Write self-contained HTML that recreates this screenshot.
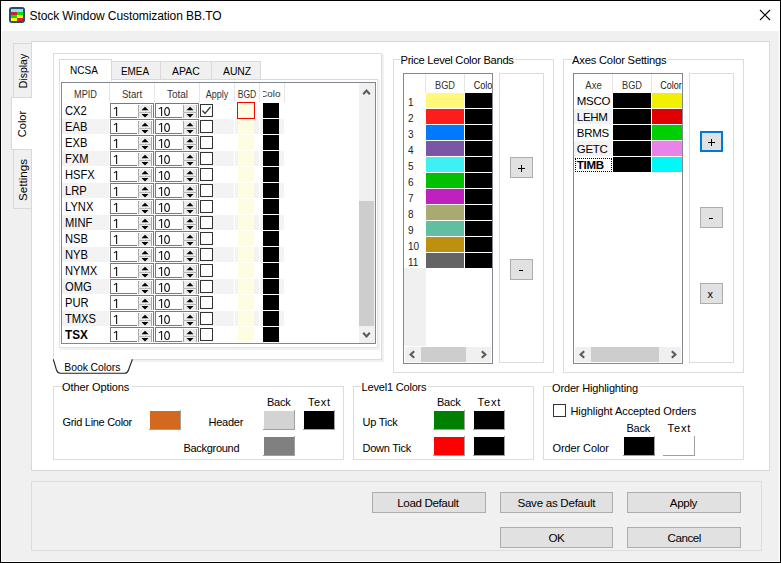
<!DOCTYPE html><html><head><meta charset="utf-8"><style>
html,body{margin:0;padding:0;}
body{width:781px;height:563px;position:relative;overflow:hidden;background:#f0f0f0;font-family:"Liberation Sans",sans-serif;}
.a{position:absolute;box-sizing:border-box;}
.t{white-space:pre;}
</style></head><body>
<div class="a" style="left:0px;top:0px;width:781px;height:563px;background:#f0f0f0;"></div>
<div class="a" style="left:1px;top:1px;width:779px;height:30px;background:#fff;"></div>
<div class="a" style="left:1px;top:1px;width:1px;height:561px;background:#fff;"></div>
<div class="a" style="left:779px;top:1px;width:1px;height:561px;background:#fff;"></div>
<div class="a" style="left:1px;top:561px;width:779px;height:1px;background:#fff;"></div>
<div class="a" style="left:0px;top:0px;width:781px;height:1px;background:#000;"></div>
<div class="a" style="left:0px;top:562px;width:781px;height:1px;background:#000;"></div>
<div class="a" style="left:0px;top:0px;width:1px;height:563px;background:#000;"></div>
<div class="a" style="left:780px;top:0px;width:1px;height:563px;background:#000;"></div>
<div class="a" style="left:9px;top:7px;width:16px;height:16px;background:#2b4b70;border-radius:3px;"></div>
<div class="a" style="left:11px;top:9px;width:12px;height:3px;background:#90e0f0;"></div>
<div class="a" style="left:11px;top:12px;width:6px;height:3px;background:#d42222;"></div>
<div class="a" style="left:17px;top:12px;width:6px;height:3px;background:#00e400;"></div>
<div class="a" style="left:11px;top:15px;width:6px;height:3px;background:#00e400;"></div>
<div class="a" style="left:17px;top:15px;width:6px;height:3px;background:#ffff00;"></div>
<div class="a" style="left:11px;top:18px;width:6px;height:3px;background:#ffff00;"></div>
<div class="a" style="left:17px;top:18px;width:6px;height:3px;background:#d42222;"></div>
<div class="a t" style="left:29.50px;top:10.04px;font-size:12px;line-height:12px;color:#000;letter-spacing:-0.08px;">Stock Window Customization BB.TO</div>
<svg class="a" style="left:759px;top:9px" width="12" height="12"><path d="M1 1L11 11M11 1L1 11" stroke="#000" stroke-width="1.1"/></svg>
<div class="a" style="left:13px;top:43px;width:19px;height:55px;border:1px solid #d9d9d9;background:#f0f0f0;"></div>
<div class="a" style="left:13px;top:149px;width:19px;height:60px;border:1px solid #d9d9d9;background:#f0f0f0;"></div>
<div class="a" style="left:31px;top:41px;width:739px;height:430px;border:1px solid #d9d9d9;background:#fff;"></div>
<div class="a" style="left:11px;top:97px;width:21px;height:53px;border:1px solid #d9d9d9;background:#fff;border-right:none;"></div>
<div class="a" style="left:31px;top:98px;width:1px;height:51px;background:#fff;"></div>
<div class="a t" style="left:23px;top:71px;font-size:10.5px;line-height:10.5px;transform:translate(-50%,-50%) rotate(-90deg);">Display</div>
<div class="a t" style="left:21.5px;top:124px;font-size:11px;line-height:11px;transform:translate(-50%,-50%) rotate(-90deg);">Color</div>
<div class="a t" style="left:23px;top:179.5px;font-size:11.6px;line-height:11.6px;transform:translate(-50%,-50%) rotate(-90deg);">Settings</div>
<div class="a" style="left:53px;top:53px;width:329px;height:307px;border:1px solid #dcdcdc;background:#fff;"></div>
<div class="a" style="left:382px;top:54px;width:2px;height:308px;background:#f1f1f1;"></div>
<div class="a" style="left:132px;top:360px;width:252px;height:2px;background:#f1f1f1;"></div>
<svg class="a" style="left:50px;top:356px" width="90" height="22"><path d="M3.3 2.4 L3.3 3.3 L6.5 14 Q7.6 17.2 10.5 17.2 H74.5 Q77.6 17.2 78.5 14 L82.4 3.3 L82.4 2.4 Z" fill="#fff" stroke="none"/><path d="M3.3 3.3 L6.5 14 Q7.6 17.2 10.5 17.2 H74.5 Q77.6 17.2 78.5 14 L82.4 3.3" fill="none" stroke="#222" stroke-width="1.1"/></svg>
<div class="a t" style="left:64.30px;top:363.17px;font-size:10.4px;line-height:10.4px;color:#000;letter-spacing:-0.05px;">Book Colors</div>
<div class="a" style="left:59px;top:79px;width:319px;height:269px;border:1px solid #e3e3e3;background:#fff;"></div>
<div class="a" style="left:378px;top:80px;width:2px;height:270px;background:#f2f2f2;"></div>
<div class="a" style="left:60px;top:348px;width:320px;height:2px;background:#f2f2f2;"></div>
<div class="a" style="left:111px;top:61px;width:50px;height:19px;border:1px solid #d9d9d9;background:#f0f0f0;"></div>
<div class="a" style="left:160px;top:61px;width:52px;height:19px;border:1px solid #d9d9d9;background:#f0f0f0;"></div>
<div class="a" style="left:211px;top:61px;width:50px;height:19px;border:1px solid #d9d9d9;background:#f0f0f0;"></div>
<div class="a" style="left:59px;top:59px;width:53px;height:22px;border:1px solid #d9d9d9;background:#fff;border-bottom:none;"></div>
<div class="a" style="left:111px;top:79px;width:267px;height:1px;background:#d9d9d9;"></div>
<div class="a" style="left:60px;top:79px;width:51px;height:1px;background:#fff;"></div>
<div class="a t" style="left:70.00px;top:65.42px;font-size:11px;line-height:11px;color:#000;transform:scaleX(0.91);transform-origin:0 0;">NCSA</div>
<div class="a t" style="left:120.70px;top:66.42px;font-size:11px;line-height:11px;color:#000;transform:scaleX(0.9);transform-origin:0 0;">EMEA</div>
<div class="a t" style="left:172.30px;top:66.42px;font-size:11px;line-height:11px;color:#000;transform:scaleX(0.95);transform-origin:0 0;">APAC</div>
<div class="a t" style="left:223.30px;top:66.42px;font-size:11px;line-height:11px;color:#000;transform:scaleX(0.94);transform-origin:0 0;">AUNZ</div>
<div class="a" style="left:61px;top:82px;width:315px;height:262px;border:1px solid #828790;background:#fff;"></div>
<div class="a" style="left:109px;top:83px;width:1px;height:19px;background:#e5e5e5;"></div>
<div class="a" style="left:154px;top:83px;width:1px;height:19px;background:#e5e5e5;"></div>
<div class="a" style="left:199px;top:83px;width:1px;height:19px;background:#e5e5e5;"></div>
<div class="a" style="left:234px;top:83px;width:1px;height:19px;background:#e5e5e5;"></div>
<div class="a" style="left:259px;top:83px;width:1px;height:19px;background:#e5e5e5;"></div>
<div class="a" style="left:284px;top:83px;width:1px;height:19px;background:#e5e5e5;"></div>
<div class="a" style="left:62px;top:88.88px;width:47px;height:12.3px;overflow:hidden;"><div class="a t" style="left:0px;top:0;width:47px;text-align:center;font-size:10.3px;line-height:11.3px;color:#333;letter-spacing:0px;transform:scaleX(0.89);transform-origin:50% 0;">MPID</div></div>
<div class="a" style="left:110px;top:88.88px;width:44px;height:12.3px;overflow:hidden;"><div class="a t" style="left:0px;top:0;width:44px;text-align:center;font-size:10.3px;line-height:11.3px;color:#333;letter-spacing:0px;transform:scaleX(0.93);transform-origin:50% 0;">Start</div></div>
<div class="a" style="left:156px;top:88.88px;width:43px;height:12.3px;overflow:hidden;"><div class="a t" style="left:0px;top:0;width:43px;text-align:center;font-size:10.3px;line-height:11.3px;color:#333;letter-spacing:0px;transform:scaleX(0.97);transform-origin:50% 0;">Total</div></div>
<div class="a" style="left:200px;top:88.88px;width:34px;height:12.3px;overflow:hidden;"><div class="a t" style="left:0px;top:0;width:34px;text-align:center;font-size:10.3px;line-height:11.3px;color:#333;letter-spacing:0px;transform:scaleX(0.88);transform-origin:50% 0;">Apply</div></div>
<div class="a" style="left:235px;top:88.90px;width:24px;height:12px;overflow:hidden;"><div class="a t" style="left:0px;top:0;width:24px;text-align:center;font-size:10px;line-height:11px;color:#333;letter-spacing:0px;transform:scaleX(0.86);transform-origin:50% 0;">BGD</div></div>
<div class="a" style="left:263px;top:88.92px;width:18px;height:11.8px;overflow:hidden;"><div class="a t" style="left:-8px;top:0;width:34px;text-align:center;font-size:9.8px;line-height:10.8px;color:#333;letter-spacing:0px;">Color</div></div>
<div class="a t" style="left:64.80px;top:105.34px;font-size:12px;line-height:12px;color:#000;transform:scaleX(0.93);transform-origin:0 0;">CX2</div>
<div class="a" style="left:110px;top:103px;width:44px;height:15px;background:#fff;border-top:1px solid #7a7a7a;border-left:1px solid #7a7a7a;border-right:1px solid #7a7a7a;"></div>
<div class="a" style="left:110px;top:117px;width:27px;height:1px;background:#7a7a7a;"></div>
<div class="a" style="left:138px;top:105px;width:14px;height:13px;background:#ececec;"></div>
<div class="a" style="left:138px;top:105px;width:1px;height:13px;background:#a8a8a8;"></div>
<div class="a" style="left:151px;top:105px;width:1px;height:13px;background:#a8a8a8;"></div>
<div class="a" style="left:138px;top:112px;width:14px;height:1px;background:#b8b8b8;"></div>
<svg class="a" style="left:138px;top:105px" width="14" height="13"><path d="M3.5 5.2 L7 1.8 L10.5 5.2Z M3.5 9 L7 12.4 L10.5 9Z" fill="#000"/></svg>
<svg class="a" style="left:110px;top:103px" width="20" height="15"><rect x="6" y="4" width="1.15" height="9" fill="#1a1a1a"/><path d="M4 5.9 L6.6 4.3" stroke="#1a1a1a" stroke-width="1.1"/></svg>
<div class="a" style="left:155px;top:103px;width:44px;height:15px;background:#fff;border-top:1px solid #7a7a7a;border-left:1px solid #7a7a7a;border-right:1px solid #7a7a7a;"></div>
<div class="a" style="left:155px;top:117px;width:27px;height:1px;background:#7a7a7a;"></div>
<div class="a" style="left:183px;top:105px;width:14px;height:13px;background:#ececec;"></div>
<div class="a" style="left:183px;top:105px;width:1px;height:13px;background:#a8a8a8;"></div>
<div class="a" style="left:196px;top:105px;width:1px;height:13px;background:#a8a8a8;"></div>
<div class="a" style="left:183px;top:112px;width:14px;height:1px;background:#b8b8b8;"></div>
<svg class="a" style="left:183px;top:105px" width="14" height="13"><path d="M3.5 5.2 L7 1.8 L10.5 5.2Z M3.5 9 L7 12.4 L10.5 9Z" fill="#000"/></svg>
<svg class="a" style="left:155px;top:103px" width="20" height="15"><rect x="6" y="4" width="1.15" height="9" fill="#1a1a1a"/><path d="M4 5.9 L6.6 4.3" stroke="#1a1a1a" stroke-width="1.1"/><ellipse cx="12.05" cy="8.5" rx="2.35" ry="3.95" fill="none" stroke="#1a1a1a" stroke-width="1.15"/></svg>
<div class="a" style="left:200px;top:104px;width:13px;height:13px;border:1px solid #333;background:#fff;"></div>
<div class="a" style="left:238px;top:103px;width:16px;height:15px;background:#fffde1;"></div>
<div class="a" style="left:263px;top:103px;width:16px;height:15px;background:#000;"></div>
<div class="a" style="left:62px;top:119px;width:222px;height:15px;background:#f3f3f3;"></div>
<div class="a" style="left:109px;top:119px;width:1px;height:15px;background:#fff;"></div>
<div class="a" style="left:234px;top:119px;width:1px;height:15px;background:#fff;"></div>
<div class="a" style="left:259px;top:119px;width:1px;height:15px;background:#fff;"></div>
<div class="a t" style="left:64.80px;top:121.34px;font-size:12px;line-height:12px;color:#000;transform:scaleX(0.93);transform-origin:0 0;">EAB</div>
<div class="a" style="left:110px;top:119px;width:44px;height:15px;background:#fff;border-top:1px solid #7a7a7a;border-left:1px solid #7a7a7a;border-right:1px solid #7a7a7a;"></div>
<div class="a" style="left:110px;top:133px;width:27px;height:1px;background:#7a7a7a;"></div>
<div class="a" style="left:138px;top:121px;width:14px;height:13px;background:#ececec;"></div>
<div class="a" style="left:138px;top:121px;width:1px;height:13px;background:#a8a8a8;"></div>
<div class="a" style="left:151px;top:121px;width:1px;height:13px;background:#a8a8a8;"></div>
<div class="a" style="left:138px;top:128px;width:14px;height:1px;background:#b8b8b8;"></div>
<svg class="a" style="left:138px;top:121px" width="14" height="13"><path d="M3.5 5.2 L7 1.8 L10.5 5.2Z M3.5 9 L7 12.4 L10.5 9Z" fill="#000"/></svg>
<svg class="a" style="left:110px;top:119px" width="20" height="15"><rect x="6" y="4" width="1.15" height="9" fill="#1a1a1a"/><path d="M4 5.9 L6.6 4.3" stroke="#1a1a1a" stroke-width="1.1"/></svg>
<div class="a" style="left:155px;top:119px;width:44px;height:15px;background:#fff;border-top:1px solid #7a7a7a;border-left:1px solid #7a7a7a;border-right:1px solid #7a7a7a;"></div>
<div class="a" style="left:155px;top:133px;width:27px;height:1px;background:#7a7a7a;"></div>
<div class="a" style="left:183px;top:121px;width:14px;height:13px;background:#ececec;"></div>
<div class="a" style="left:183px;top:121px;width:1px;height:13px;background:#a8a8a8;"></div>
<div class="a" style="left:196px;top:121px;width:1px;height:13px;background:#a8a8a8;"></div>
<div class="a" style="left:183px;top:128px;width:14px;height:1px;background:#b8b8b8;"></div>
<svg class="a" style="left:183px;top:121px" width="14" height="13"><path d="M3.5 5.2 L7 1.8 L10.5 5.2Z M3.5 9 L7 12.4 L10.5 9Z" fill="#000"/></svg>
<svg class="a" style="left:155px;top:119px" width="20" height="15"><rect x="6" y="4" width="1.15" height="9" fill="#1a1a1a"/><path d="M4 5.9 L6.6 4.3" stroke="#1a1a1a" stroke-width="1.1"/><ellipse cx="12.05" cy="8.5" rx="2.35" ry="3.95" fill="none" stroke="#1a1a1a" stroke-width="1.15"/></svg>
<div class="a" style="left:200px;top:120px;width:13px;height:13px;border:1px solid #333;background:#fff;"></div>
<div class="a" style="left:238px;top:119px;width:16px;height:15px;background:#fffde1;"></div>
<div class="a" style="left:263px;top:119px;width:16px;height:15px;background:#000;"></div>
<div class="a t" style="left:64.80px;top:137.34px;font-size:12px;line-height:12px;color:#000;transform:scaleX(0.93);transform-origin:0 0;">EXB</div>
<div class="a" style="left:110px;top:135px;width:44px;height:15px;background:#fff;border-top:1px solid #7a7a7a;border-left:1px solid #7a7a7a;border-right:1px solid #7a7a7a;"></div>
<div class="a" style="left:110px;top:149px;width:27px;height:1px;background:#7a7a7a;"></div>
<div class="a" style="left:138px;top:137px;width:14px;height:13px;background:#ececec;"></div>
<div class="a" style="left:138px;top:137px;width:1px;height:13px;background:#a8a8a8;"></div>
<div class="a" style="left:151px;top:137px;width:1px;height:13px;background:#a8a8a8;"></div>
<div class="a" style="left:138px;top:144px;width:14px;height:1px;background:#b8b8b8;"></div>
<svg class="a" style="left:138px;top:137px" width="14" height="13"><path d="M3.5 5.2 L7 1.8 L10.5 5.2Z M3.5 9 L7 12.4 L10.5 9Z" fill="#000"/></svg>
<svg class="a" style="left:110px;top:135px" width="20" height="15"><rect x="6" y="4" width="1.15" height="9" fill="#1a1a1a"/><path d="M4 5.9 L6.6 4.3" stroke="#1a1a1a" stroke-width="1.1"/></svg>
<div class="a" style="left:155px;top:135px;width:44px;height:15px;background:#fff;border-top:1px solid #7a7a7a;border-left:1px solid #7a7a7a;border-right:1px solid #7a7a7a;"></div>
<div class="a" style="left:155px;top:149px;width:27px;height:1px;background:#7a7a7a;"></div>
<div class="a" style="left:183px;top:137px;width:14px;height:13px;background:#ececec;"></div>
<div class="a" style="left:183px;top:137px;width:1px;height:13px;background:#a8a8a8;"></div>
<div class="a" style="left:196px;top:137px;width:1px;height:13px;background:#a8a8a8;"></div>
<div class="a" style="left:183px;top:144px;width:14px;height:1px;background:#b8b8b8;"></div>
<svg class="a" style="left:183px;top:137px" width="14" height="13"><path d="M3.5 5.2 L7 1.8 L10.5 5.2Z M3.5 9 L7 12.4 L10.5 9Z" fill="#000"/></svg>
<svg class="a" style="left:155px;top:135px" width="20" height="15"><rect x="6" y="4" width="1.15" height="9" fill="#1a1a1a"/><path d="M4 5.9 L6.6 4.3" stroke="#1a1a1a" stroke-width="1.1"/><ellipse cx="12.05" cy="8.5" rx="2.35" ry="3.95" fill="none" stroke="#1a1a1a" stroke-width="1.15"/></svg>
<div class="a" style="left:200px;top:136px;width:13px;height:13px;border:1px solid #333;background:#fff;"></div>
<div class="a" style="left:238px;top:135px;width:16px;height:15px;background:#fffde1;"></div>
<div class="a" style="left:263px;top:135px;width:16px;height:15px;background:#000;"></div>
<div class="a" style="left:62px;top:151px;width:222px;height:15px;background:#f3f3f3;"></div>
<div class="a" style="left:109px;top:151px;width:1px;height:15px;background:#fff;"></div>
<div class="a" style="left:234px;top:151px;width:1px;height:15px;background:#fff;"></div>
<div class="a" style="left:259px;top:151px;width:1px;height:15px;background:#fff;"></div>
<div class="a t" style="left:64.80px;top:153.34px;font-size:12px;line-height:12px;color:#000;transform:scaleX(0.93);transform-origin:0 0;">FXM</div>
<div class="a" style="left:110px;top:151px;width:44px;height:15px;background:#fff;border-top:1px solid #7a7a7a;border-left:1px solid #7a7a7a;border-right:1px solid #7a7a7a;"></div>
<div class="a" style="left:110px;top:165px;width:27px;height:1px;background:#7a7a7a;"></div>
<div class="a" style="left:138px;top:153px;width:14px;height:13px;background:#ececec;"></div>
<div class="a" style="left:138px;top:153px;width:1px;height:13px;background:#a8a8a8;"></div>
<div class="a" style="left:151px;top:153px;width:1px;height:13px;background:#a8a8a8;"></div>
<div class="a" style="left:138px;top:160px;width:14px;height:1px;background:#b8b8b8;"></div>
<svg class="a" style="left:138px;top:153px" width="14" height="13"><path d="M3.5 5.2 L7 1.8 L10.5 5.2Z M3.5 9 L7 12.4 L10.5 9Z" fill="#000"/></svg>
<svg class="a" style="left:110px;top:151px" width="20" height="15"><rect x="6" y="4" width="1.15" height="9" fill="#1a1a1a"/><path d="M4 5.9 L6.6 4.3" stroke="#1a1a1a" stroke-width="1.1"/></svg>
<div class="a" style="left:155px;top:151px;width:44px;height:15px;background:#fff;border-top:1px solid #7a7a7a;border-left:1px solid #7a7a7a;border-right:1px solid #7a7a7a;"></div>
<div class="a" style="left:155px;top:165px;width:27px;height:1px;background:#7a7a7a;"></div>
<div class="a" style="left:183px;top:153px;width:14px;height:13px;background:#ececec;"></div>
<div class="a" style="left:183px;top:153px;width:1px;height:13px;background:#a8a8a8;"></div>
<div class="a" style="left:196px;top:153px;width:1px;height:13px;background:#a8a8a8;"></div>
<div class="a" style="left:183px;top:160px;width:14px;height:1px;background:#b8b8b8;"></div>
<svg class="a" style="left:183px;top:153px" width="14" height="13"><path d="M3.5 5.2 L7 1.8 L10.5 5.2Z M3.5 9 L7 12.4 L10.5 9Z" fill="#000"/></svg>
<svg class="a" style="left:155px;top:151px" width="20" height="15"><rect x="6" y="4" width="1.15" height="9" fill="#1a1a1a"/><path d="M4 5.9 L6.6 4.3" stroke="#1a1a1a" stroke-width="1.1"/><ellipse cx="12.05" cy="8.5" rx="2.35" ry="3.95" fill="none" stroke="#1a1a1a" stroke-width="1.15"/></svg>
<div class="a" style="left:200px;top:152px;width:13px;height:13px;border:1px solid #333;background:#fff;"></div>
<div class="a" style="left:238px;top:151px;width:16px;height:15px;background:#fffde1;"></div>
<div class="a" style="left:263px;top:151px;width:16px;height:15px;background:#000;"></div>
<div class="a t" style="left:64.80px;top:169.34px;font-size:12px;line-height:12px;color:#000;transform:scaleX(0.93);transform-origin:0 0;">HSFX</div>
<div class="a" style="left:110px;top:167px;width:44px;height:15px;background:#fff;border-top:1px solid #7a7a7a;border-left:1px solid #7a7a7a;border-right:1px solid #7a7a7a;"></div>
<div class="a" style="left:110px;top:181px;width:27px;height:1px;background:#7a7a7a;"></div>
<div class="a" style="left:138px;top:169px;width:14px;height:13px;background:#ececec;"></div>
<div class="a" style="left:138px;top:169px;width:1px;height:13px;background:#a8a8a8;"></div>
<div class="a" style="left:151px;top:169px;width:1px;height:13px;background:#a8a8a8;"></div>
<div class="a" style="left:138px;top:176px;width:14px;height:1px;background:#b8b8b8;"></div>
<svg class="a" style="left:138px;top:169px" width="14" height="13"><path d="M3.5 5.2 L7 1.8 L10.5 5.2Z M3.5 9 L7 12.4 L10.5 9Z" fill="#000"/></svg>
<svg class="a" style="left:110px;top:167px" width="20" height="15"><rect x="6" y="4" width="1.15" height="9" fill="#1a1a1a"/><path d="M4 5.9 L6.6 4.3" stroke="#1a1a1a" stroke-width="1.1"/></svg>
<div class="a" style="left:155px;top:167px;width:44px;height:15px;background:#fff;border-top:1px solid #7a7a7a;border-left:1px solid #7a7a7a;border-right:1px solid #7a7a7a;"></div>
<div class="a" style="left:155px;top:181px;width:27px;height:1px;background:#7a7a7a;"></div>
<div class="a" style="left:183px;top:169px;width:14px;height:13px;background:#ececec;"></div>
<div class="a" style="left:183px;top:169px;width:1px;height:13px;background:#a8a8a8;"></div>
<div class="a" style="left:196px;top:169px;width:1px;height:13px;background:#a8a8a8;"></div>
<div class="a" style="left:183px;top:176px;width:14px;height:1px;background:#b8b8b8;"></div>
<svg class="a" style="left:183px;top:169px" width="14" height="13"><path d="M3.5 5.2 L7 1.8 L10.5 5.2Z M3.5 9 L7 12.4 L10.5 9Z" fill="#000"/></svg>
<svg class="a" style="left:155px;top:167px" width="20" height="15"><rect x="6" y="4" width="1.15" height="9" fill="#1a1a1a"/><path d="M4 5.9 L6.6 4.3" stroke="#1a1a1a" stroke-width="1.1"/><ellipse cx="12.05" cy="8.5" rx="2.35" ry="3.95" fill="none" stroke="#1a1a1a" stroke-width="1.15"/></svg>
<div class="a" style="left:200px;top:168px;width:13px;height:13px;border:1px solid #333;background:#fff;"></div>
<div class="a" style="left:238px;top:167px;width:16px;height:15px;background:#fffde1;"></div>
<div class="a" style="left:263px;top:167px;width:16px;height:15px;background:#000;"></div>
<div class="a" style="left:62px;top:183px;width:222px;height:15px;background:#f3f3f3;"></div>
<div class="a" style="left:109px;top:183px;width:1px;height:15px;background:#fff;"></div>
<div class="a" style="left:234px;top:183px;width:1px;height:15px;background:#fff;"></div>
<div class="a" style="left:259px;top:183px;width:1px;height:15px;background:#fff;"></div>
<div class="a t" style="left:64.80px;top:185.34px;font-size:12px;line-height:12px;color:#000;transform:scaleX(0.93);transform-origin:0 0;">LRP</div>
<div class="a" style="left:110px;top:183px;width:44px;height:15px;background:#fff;border-top:1px solid #7a7a7a;border-left:1px solid #7a7a7a;border-right:1px solid #7a7a7a;"></div>
<div class="a" style="left:110px;top:197px;width:27px;height:1px;background:#7a7a7a;"></div>
<div class="a" style="left:138px;top:185px;width:14px;height:13px;background:#ececec;"></div>
<div class="a" style="left:138px;top:185px;width:1px;height:13px;background:#a8a8a8;"></div>
<div class="a" style="left:151px;top:185px;width:1px;height:13px;background:#a8a8a8;"></div>
<div class="a" style="left:138px;top:192px;width:14px;height:1px;background:#b8b8b8;"></div>
<svg class="a" style="left:138px;top:185px" width="14" height="13"><path d="M3.5 5.2 L7 1.8 L10.5 5.2Z M3.5 9 L7 12.4 L10.5 9Z" fill="#000"/></svg>
<svg class="a" style="left:110px;top:183px" width="20" height="15"><rect x="6" y="4" width="1.15" height="9" fill="#1a1a1a"/><path d="M4 5.9 L6.6 4.3" stroke="#1a1a1a" stroke-width="1.1"/></svg>
<div class="a" style="left:155px;top:183px;width:44px;height:15px;background:#fff;border-top:1px solid #7a7a7a;border-left:1px solid #7a7a7a;border-right:1px solid #7a7a7a;"></div>
<div class="a" style="left:155px;top:197px;width:27px;height:1px;background:#7a7a7a;"></div>
<div class="a" style="left:183px;top:185px;width:14px;height:13px;background:#ececec;"></div>
<div class="a" style="left:183px;top:185px;width:1px;height:13px;background:#a8a8a8;"></div>
<div class="a" style="left:196px;top:185px;width:1px;height:13px;background:#a8a8a8;"></div>
<div class="a" style="left:183px;top:192px;width:14px;height:1px;background:#b8b8b8;"></div>
<svg class="a" style="left:183px;top:185px" width="14" height="13"><path d="M3.5 5.2 L7 1.8 L10.5 5.2Z M3.5 9 L7 12.4 L10.5 9Z" fill="#000"/></svg>
<svg class="a" style="left:155px;top:183px" width="20" height="15"><rect x="6" y="4" width="1.15" height="9" fill="#1a1a1a"/><path d="M4 5.9 L6.6 4.3" stroke="#1a1a1a" stroke-width="1.1"/><ellipse cx="12.05" cy="8.5" rx="2.35" ry="3.95" fill="none" stroke="#1a1a1a" stroke-width="1.15"/></svg>
<div class="a" style="left:200px;top:184px;width:13px;height:13px;border:1px solid #333;background:#fff;"></div>
<div class="a" style="left:238px;top:183px;width:16px;height:15px;background:#fffde1;"></div>
<div class="a" style="left:263px;top:183px;width:16px;height:15px;background:#000;"></div>
<div class="a t" style="left:64.80px;top:201.34px;font-size:12px;line-height:12px;color:#000;transform:scaleX(0.93);transform-origin:0 0;">LYNX</div>
<div class="a" style="left:110px;top:199px;width:44px;height:15px;background:#fff;border-top:1px solid #7a7a7a;border-left:1px solid #7a7a7a;border-right:1px solid #7a7a7a;"></div>
<div class="a" style="left:110px;top:213px;width:27px;height:1px;background:#7a7a7a;"></div>
<div class="a" style="left:138px;top:201px;width:14px;height:13px;background:#ececec;"></div>
<div class="a" style="left:138px;top:201px;width:1px;height:13px;background:#a8a8a8;"></div>
<div class="a" style="left:151px;top:201px;width:1px;height:13px;background:#a8a8a8;"></div>
<div class="a" style="left:138px;top:208px;width:14px;height:1px;background:#b8b8b8;"></div>
<svg class="a" style="left:138px;top:201px" width="14" height="13"><path d="M3.5 5.2 L7 1.8 L10.5 5.2Z M3.5 9 L7 12.4 L10.5 9Z" fill="#000"/></svg>
<svg class="a" style="left:110px;top:199px" width="20" height="15"><rect x="6" y="4" width="1.15" height="9" fill="#1a1a1a"/><path d="M4 5.9 L6.6 4.3" stroke="#1a1a1a" stroke-width="1.1"/></svg>
<div class="a" style="left:155px;top:199px;width:44px;height:15px;background:#fff;border-top:1px solid #7a7a7a;border-left:1px solid #7a7a7a;border-right:1px solid #7a7a7a;"></div>
<div class="a" style="left:155px;top:213px;width:27px;height:1px;background:#7a7a7a;"></div>
<div class="a" style="left:183px;top:201px;width:14px;height:13px;background:#ececec;"></div>
<div class="a" style="left:183px;top:201px;width:1px;height:13px;background:#a8a8a8;"></div>
<div class="a" style="left:196px;top:201px;width:1px;height:13px;background:#a8a8a8;"></div>
<div class="a" style="left:183px;top:208px;width:14px;height:1px;background:#b8b8b8;"></div>
<svg class="a" style="left:183px;top:201px" width="14" height="13"><path d="M3.5 5.2 L7 1.8 L10.5 5.2Z M3.5 9 L7 12.4 L10.5 9Z" fill="#000"/></svg>
<svg class="a" style="left:155px;top:199px" width="20" height="15"><rect x="6" y="4" width="1.15" height="9" fill="#1a1a1a"/><path d="M4 5.9 L6.6 4.3" stroke="#1a1a1a" stroke-width="1.1"/><ellipse cx="12.05" cy="8.5" rx="2.35" ry="3.95" fill="none" stroke="#1a1a1a" stroke-width="1.15"/></svg>
<div class="a" style="left:200px;top:200px;width:13px;height:13px;border:1px solid #333;background:#fff;"></div>
<div class="a" style="left:238px;top:199px;width:16px;height:15px;background:#fffde1;"></div>
<div class="a" style="left:263px;top:199px;width:16px;height:15px;background:#000;"></div>
<div class="a" style="left:62px;top:215px;width:222px;height:15px;background:#f3f3f3;"></div>
<div class="a" style="left:109px;top:215px;width:1px;height:15px;background:#fff;"></div>
<div class="a" style="left:234px;top:215px;width:1px;height:15px;background:#fff;"></div>
<div class="a" style="left:259px;top:215px;width:1px;height:15px;background:#fff;"></div>
<div class="a t" style="left:64.80px;top:217.34px;font-size:12px;line-height:12px;color:#000;transform:scaleX(0.93);transform-origin:0 0;">MINF</div>
<div class="a" style="left:110px;top:215px;width:44px;height:15px;background:#fff;border-top:1px solid #7a7a7a;border-left:1px solid #7a7a7a;border-right:1px solid #7a7a7a;"></div>
<div class="a" style="left:110px;top:229px;width:27px;height:1px;background:#7a7a7a;"></div>
<div class="a" style="left:138px;top:217px;width:14px;height:13px;background:#ececec;"></div>
<div class="a" style="left:138px;top:217px;width:1px;height:13px;background:#a8a8a8;"></div>
<div class="a" style="left:151px;top:217px;width:1px;height:13px;background:#a8a8a8;"></div>
<div class="a" style="left:138px;top:224px;width:14px;height:1px;background:#b8b8b8;"></div>
<svg class="a" style="left:138px;top:217px" width="14" height="13"><path d="M3.5 5.2 L7 1.8 L10.5 5.2Z M3.5 9 L7 12.4 L10.5 9Z" fill="#000"/></svg>
<svg class="a" style="left:110px;top:215px" width="20" height="15"><rect x="6" y="4" width="1.15" height="9" fill="#1a1a1a"/><path d="M4 5.9 L6.6 4.3" stroke="#1a1a1a" stroke-width="1.1"/></svg>
<div class="a" style="left:155px;top:215px;width:44px;height:15px;background:#fff;border-top:1px solid #7a7a7a;border-left:1px solid #7a7a7a;border-right:1px solid #7a7a7a;"></div>
<div class="a" style="left:155px;top:229px;width:27px;height:1px;background:#7a7a7a;"></div>
<div class="a" style="left:183px;top:217px;width:14px;height:13px;background:#ececec;"></div>
<div class="a" style="left:183px;top:217px;width:1px;height:13px;background:#a8a8a8;"></div>
<div class="a" style="left:196px;top:217px;width:1px;height:13px;background:#a8a8a8;"></div>
<div class="a" style="left:183px;top:224px;width:14px;height:1px;background:#b8b8b8;"></div>
<svg class="a" style="left:183px;top:217px" width="14" height="13"><path d="M3.5 5.2 L7 1.8 L10.5 5.2Z M3.5 9 L7 12.4 L10.5 9Z" fill="#000"/></svg>
<svg class="a" style="left:155px;top:215px" width="20" height="15"><rect x="6" y="4" width="1.15" height="9" fill="#1a1a1a"/><path d="M4 5.9 L6.6 4.3" stroke="#1a1a1a" stroke-width="1.1"/><ellipse cx="12.05" cy="8.5" rx="2.35" ry="3.95" fill="none" stroke="#1a1a1a" stroke-width="1.15"/></svg>
<div class="a" style="left:200px;top:216px;width:13px;height:13px;border:1px solid #333;background:#fff;"></div>
<div class="a" style="left:238px;top:215px;width:16px;height:15px;background:#fffde1;"></div>
<div class="a" style="left:263px;top:215px;width:16px;height:15px;background:#000;"></div>
<div class="a t" style="left:64.80px;top:233.34px;font-size:12px;line-height:12px;color:#000;transform:scaleX(0.93);transform-origin:0 0;">NSB</div>
<div class="a" style="left:110px;top:231px;width:44px;height:15px;background:#fff;border-top:1px solid #7a7a7a;border-left:1px solid #7a7a7a;border-right:1px solid #7a7a7a;"></div>
<div class="a" style="left:110px;top:245px;width:27px;height:1px;background:#7a7a7a;"></div>
<div class="a" style="left:138px;top:233px;width:14px;height:13px;background:#ececec;"></div>
<div class="a" style="left:138px;top:233px;width:1px;height:13px;background:#a8a8a8;"></div>
<div class="a" style="left:151px;top:233px;width:1px;height:13px;background:#a8a8a8;"></div>
<div class="a" style="left:138px;top:240px;width:14px;height:1px;background:#b8b8b8;"></div>
<svg class="a" style="left:138px;top:233px" width="14" height="13"><path d="M3.5 5.2 L7 1.8 L10.5 5.2Z M3.5 9 L7 12.4 L10.5 9Z" fill="#000"/></svg>
<svg class="a" style="left:110px;top:231px" width="20" height="15"><rect x="6" y="4" width="1.15" height="9" fill="#1a1a1a"/><path d="M4 5.9 L6.6 4.3" stroke="#1a1a1a" stroke-width="1.1"/></svg>
<div class="a" style="left:155px;top:231px;width:44px;height:15px;background:#fff;border-top:1px solid #7a7a7a;border-left:1px solid #7a7a7a;border-right:1px solid #7a7a7a;"></div>
<div class="a" style="left:155px;top:245px;width:27px;height:1px;background:#7a7a7a;"></div>
<div class="a" style="left:183px;top:233px;width:14px;height:13px;background:#ececec;"></div>
<div class="a" style="left:183px;top:233px;width:1px;height:13px;background:#a8a8a8;"></div>
<div class="a" style="left:196px;top:233px;width:1px;height:13px;background:#a8a8a8;"></div>
<div class="a" style="left:183px;top:240px;width:14px;height:1px;background:#b8b8b8;"></div>
<svg class="a" style="left:183px;top:233px" width="14" height="13"><path d="M3.5 5.2 L7 1.8 L10.5 5.2Z M3.5 9 L7 12.4 L10.5 9Z" fill="#000"/></svg>
<svg class="a" style="left:155px;top:231px" width="20" height="15"><rect x="6" y="4" width="1.15" height="9" fill="#1a1a1a"/><path d="M4 5.9 L6.6 4.3" stroke="#1a1a1a" stroke-width="1.1"/><ellipse cx="12.05" cy="8.5" rx="2.35" ry="3.95" fill="none" stroke="#1a1a1a" stroke-width="1.15"/></svg>
<div class="a" style="left:200px;top:232px;width:13px;height:13px;border:1px solid #333;background:#fff;"></div>
<div class="a" style="left:238px;top:231px;width:16px;height:15px;background:#fffde1;"></div>
<div class="a" style="left:263px;top:231px;width:16px;height:15px;background:#000;"></div>
<div class="a" style="left:62px;top:247px;width:222px;height:15px;background:#f3f3f3;"></div>
<div class="a" style="left:109px;top:247px;width:1px;height:15px;background:#fff;"></div>
<div class="a" style="left:234px;top:247px;width:1px;height:15px;background:#fff;"></div>
<div class="a" style="left:259px;top:247px;width:1px;height:15px;background:#fff;"></div>
<div class="a t" style="left:64.80px;top:249.34px;font-size:12px;line-height:12px;color:#000;transform:scaleX(0.93);transform-origin:0 0;">NYB</div>
<div class="a" style="left:110px;top:247px;width:44px;height:15px;background:#fff;border-top:1px solid #7a7a7a;border-left:1px solid #7a7a7a;border-right:1px solid #7a7a7a;"></div>
<div class="a" style="left:110px;top:261px;width:27px;height:1px;background:#7a7a7a;"></div>
<div class="a" style="left:138px;top:249px;width:14px;height:13px;background:#ececec;"></div>
<div class="a" style="left:138px;top:249px;width:1px;height:13px;background:#a8a8a8;"></div>
<div class="a" style="left:151px;top:249px;width:1px;height:13px;background:#a8a8a8;"></div>
<div class="a" style="left:138px;top:256px;width:14px;height:1px;background:#b8b8b8;"></div>
<svg class="a" style="left:138px;top:249px" width="14" height="13"><path d="M3.5 5.2 L7 1.8 L10.5 5.2Z M3.5 9 L7 12.4 L10.5 9Z" fill="#000"/></svg>
<svg class="a" style="left:110px;top:247px" width="20" height="15"><rect x="6" y="4" width="1.15" height="9" fill="#1a1a1a"/><path d="M4 5.9 L6.6 4.3" stroke="#1a1a1a" stroke-width="1.1"/></svg>
<div class="a" style="left:155px;top:247px;width:44px;height:15px;background:#fff;border-top:1px solid #7a7a7a;border-left:1px solid #7a7a7a;border-right:1px solid #7a7a7a;"></div>
<div class="a" style="left:155px;top:261px;width:27px;height:1px;background:#7a7a7a;"></div>
<div class="a" style="left:183px;top:249px;width:14px;height:13px;background:#ececec;"></div>
<div class="a" style="left:183px;top:249px;width:1px;height:13px;background:#a8a8a8;"></div>
<div class="a" style="left:196px;top:249px;width:1px;height:13px;background:#a8a8a8;"></div>
<div class="a" style="left:183px;top:256px;width:14px;height:1px;background:#b8b8b8;"></div>
<svg class="a" style="left:183px;top:249px" width="14" height="13"><path d="M3.5 5.2 L7 1.8 L10.5 5.2Z M3.5 9 L7 12.4 L10.5 9Z" fill="#000"/></svg>
<svg class="a" style="left:155px;top:247px" width="20" height="15"><rect x="6" y="4" width="1.15" height="9" fill="#1a1a1a"/><path d="M4 5.9 L6.6 4.3" stroke="#1a1a1a" stroke-width="1.1"/><ellipse cx="12.05" cy="8.5" rx="2.35" ry="3.95" fill="none" stroke="#1a1a1a" stroke-width="1.15"/></svg>
<div class="a" style="left:200px;top:248px;width:13px;height:13px;border:1px solid #333;background:#fff;"></div>
<div class="a" style="left:238px;top:247px;width:16px;height:15px;background:#fffde1;"></div>
<div class="a" style="left:263px;top:247px;width:16px;height:15px;background:#000;"></div>
<div class="a t" style="left:64.80px;top:265.34px;font-size:12px;line-height:12px;color:#000;transform:scaleX(0.93);transform-origin:0 0;">NYMX</div>
<div class="a" style="left:110px;top:263px;width:44px;height:15px;background:#fff;border-top:1px solid #7a7a7a;border-left:1px solid #7a7a7a;border-right:1px solid #7a7a7a;"></div>
<div class="a" style="left:110px;top:277px;width:27px;height:1px;background:#7a7a7a;"></div>
<div class="a" style="left:138px;top:265px;width:14px;height:13px;background:#ececec;"></div>
<div class="a" style="left:138px;top:265px;width:1px;height:13px;background:#a8a8a8;"></div>
<div class="a" style="left:151px;top:265px;width:1px;height:13px;background:#a8a8a8;"></div>
<div class="a" style="left:138px;top:272px;width:14px;height:1px;background:#b8b8b8;"></div>
<svg class="a" style="left:138px;top:265px" width="14" height="13"><path d="M3.5 5.2 L7 1.8 L10.5 5.2Z M3.5 9 L7 12.4 L10.5 9Z" fill="#000"/></svg>
<svg class="a" style="left:110px;top:263px" width="20" height="15"><rect x="6" y="4" width="1.15" height="9" fill="#1a1a1a"/><path d="M4 5.9 L6.6 4.3" stroke="#1a1a1a" stroke-width="1.1"/></svg>
<div class="a" style="left:155px;top:263px;width:44px;height:15px;background:#fff;border-top:1px solid #7a7a7a;border-left:1px solid #7a7a7a;border-right:1px solid #7a7a7a;"></div>
<div class="a" style="left:155px;top:277px;width:27px;height:1px;background:#7a7a7a;"></div>
<div class="a" style="left:183px;top:265px;width:14px;height:13px;background:#ececec;"></div>
<div class="a" style="left:183px;top:265px;width:1px;height:13px;background:#a8a8a8;"></div>
<div class="a" style="left:196px;top:265px;width:1px;height:13px;background:#a8a8a8;"></div>
<div class="a" style="left:183px;top:272px;width:14px;height:1px;background:#b8b8b8;"></div>
<svg class="a" style="left:183px;top:265px" width="14" height="13"><path d="M3.5 5.2 L7 1.8 L10.5 5.2Z M3.5 9 L7 12.4 L10.5 9Z" fill="#000"/></svg>
<svg class="a" style="left:155px;top:263px" width="20" height="15"><rect x="6" y="4" width="1.15" height="9" fill="#1a1a1a"/><path d="M4 5.9 L6.6 4.3" stroke="#1a1a1a" stroke-width="1.1"/><ellipse cx="12.05" cy="8.5" rx="2.35" ry="3.95" fill="none" stroke="#1a1a1a" stroke-width="1.15"/></svg>
<div class="a" style="left:200px;top:264px;width:13px;height:13px;border:1px solid #333;background:#fff;"></div>
<div class="a" style="left:238px;top:263px;width:16px;height:15px;background:#fffde1;"></div>
<div class="a" style="left:263px;top:263px;width:16px;height:15px;background:#000;"></div>
<div class="a" style="left:62px;top:279px;width:222px;height:15px;background:#f3f3f3;"></div>
<div class="a" style="left:109px;top:279px;width:1px;height:15px;background:#fff;"></div>
<div class="a" style="left:234px;top:279px;width:1px;height:15px;background:#fff;"></div>
<div class="a" style="left:259px;top:279px;width:1px;height:15px;background:#fff;"></div>
<div class="a t" style="left:64.80px;top:281.34px;font-size:12px;line-height:12px;color:#000;transform:scaleX(0.93);transform-origin:0 0;">OMG</div>
<div class="a" style="left:110px;top:279px;width:44px;height:15px;background:#fff;border-top:1px solid #7a7a7a;border-left:1px solid #7a7a7a;border-right:1px solid #7a7a7a;"></div>
<div class="a" style="left:110px;top:293px;width:27px;height:1px;background:#7a7a7a;"></div>
<div class="a" style="left:138px;top:281px;width:14px;height:13px;background:#ececec;"></div>
<div class="a" style="left:138px;top:281px;width:1px;height:13px;background:#a8a8a8;"></div>
<div class="a" style="left:151px;top:281px;width:1px;height:13px;background:#a8a8a8;"></div>
<div class="a" style="left:138px;top:288px;width:14px;height:1px;background:#b8b8b8;"></div>
<svg class="a" style="left:138px;top:281px" width="14" height="13"><path d="M3.5 5.2 L7 1.8 L10.5 5.2Z M3.5 9 L7 12.4 L10.5 9Z" fill="#000"/></svg>
<svg class="a" style="left:110px;top:279px" width="20" height="15"><rect x="6" y="4" width="1.15" height="9" fill="#1a1a1a"/><path d="M4 5.9 L6.6 4.3" stroke="#1a1a1a" stroke-width="1.1"/></svg>
<div class="a" style="left:155px;top:279px;width:44px;height:15px;background:#fff;border-top:1px solid #7a7a7a;border-left:1px solid #7a7a7a;border-right:1px solid #7a7a7a;"></div>
<div class="a" style="left:155px;top:293px;width:27px;height:1px;background:#7a7a7a;"></div>
<div class="a" style="left:183px;top:281px;width:14px;height:13px;background:#ececec;"></div>
<div class="a" style="left:183px;top:281px;width:1px;height:13px;background:#a8a8a8;"></div>
<div class="a" style="left:196px;top:281px;width:1px;height:13px;background:#a8a8a8;"></div>
<div class="a" style="left:183px;top:288px;width:14px;height:1px;background:#b8b8b8;"></div>
<svg class="a" style="left:183px;top:281px" width="14" height="13"><path d="M3.5 5.2 L7 1.8 L10.5 5.2Z M3.5 9 L7 12.4 L10.5 9Z" fill="#000"/></svg>
<svg class="a" style="left:155px;top:279px" width="20" height="15"><rect x="6" y="4" width="1.15" height="9" fill="#1a1a1a"/><path d="M4 5.9 L6.6 4.3" stroke="#1a1a1a" stroke-width="1.1"/><ellipse cx="12.05" cy="8.5" rx="2.35" ry="3.95" fill="none" stroke="#1a1a1a" stroke-width="1.15"/></svg>
<div class="a" style="left:200px;top:280px;width:13px;height:13px;border:1px solid #333;background:#fff;"></div>
<div class="a" style="left:238px;top:279px;width:16px;height:15px;background:#fffde1;"></div>
<div class="a" style="left:263px;top:279px;width:16px;height:15px;background:#000;"></div>
<div class="a t" style="left:64.80px;top:297.34px;font-size:12px;line-height:12px;color:#000;transform:scaleX(0.93);transform-origin:0 0;">PUR</div>
<div class="a" style="left:110px;top:295px;width:44px;height:15px;background:#fff;border-top:1px solid #7a7a7a;border-left:1px solid #7a7a7a;border-right:1px solid #7a7a7a;"></div>
<div class="a" style="left:110px;top:309px;width:27px;height:1px;background:#7a7a7a;"></div>
<div class="a" style="left:138px;top:297px;width:14px;height:13px;background:#ececec;"></div>
<div class="a" style="left:138px;top:297px;width:1px;height:13px;background:#a8a8a8;"></div>
<div class="a" style="left:151px;top:297px;width:1px;height:13px;background:#a8a8a8;"></div>
<div class="a" style="left:138px;top:304px;width:14px;height:1px;background:#b8b8b8;"></div>
<svg class="a" style="left:138px;top:297px" width="14" height="13"><path d="M3.5 5.2 L7 1.8 L10.5 5.2Z M3.5 9 L7 12.4 L10.5 9Z" fill="#000"/></svg>
<svg class="a" style="left:110px;top:295px" width="20" height="15"><rect x="6" y="4" width="1.15" height="9" fill="#1a1a1a"/><path d="M4 5.9 L6.6 4.3" stroke="#1a1a1a" stroke-width="1.1"/></svg>
<div class="a" style="left:155px;top:295px;width:44px;height:15px;background:#fff;border-top:1px solid #7a7a7a;border-left:1px solid #7a7a7a;border-right:1px solid #7a7a7a;"></div>
<div class="a" style="left:155px;top:309px;width:27px;height:1px;background:#7a7a7a;"></div>
<div class="a" style="left:183px;top:297px;width:14px;height:13px;background:#ececec;"></div>
<div class="a" style="left:183px;top:297px;width:1px;height:13px;background:#a8a8a8;"></div>
<div class="a" style="left:196px;top:297px;width:1px;height:13px;background:#a8a8a8;"></div>
<div class="a" style="left:183px;top:304px;width:14px;height:1px;background:#b8b8b8;"></div>
<svg class="a" style="left:183px;top:297px" width="14" height="13"><path d="M3.5 5.2 L7 1.8 L10.5 5.2Z M3.5 9 L7 12.4 L10.5 9Z" fill="#000"/></svg>
<svg class="a" style="left:155px;top:295px" width="20" height="15"><rect x="6" y="4" width="1.15" height="9" fill="#1a1a1a"/><path d="M4 5.9 L6.6 4.3" stroke="#1a1a1a" stroke-width="1.1"/><ellipse cx="12.05" cy="8.5" rx="2.35" ry="3.95" fill="none" stroke="#1a1a1a" stroke-width="1.15"/></svg>
<div class="a" style="left:200px;top:296px;width:13px;height:13px;border:1px solid #333;background:#fff;"></div>
<div class="a" style="left:238px;top:295px;width:16px;height:15px;background:#fffde1;"></div>
<div class="a" style="left:263px;top:295px;width:16px;height:15px;background:#000;"></div>
<div class="a" style="left:62px;top:311px;width:222px;height:15px;background:#f3f3f3;"></div>
<div class="a" style="left:109px;top:311px;width:1px;height:15px;background:#fff;"></div>
<div class="a" style="left:234px;top:311px;width:1px;height:15px;background:#fff;"></div>
<div class="a" style="left:259px;top:311px;width:1px;height:15px;background:#fff;"></div>
<div class="a t" style="left:64.80px;top:313.34px;font-size:12px;line-height:12px;color:#000;transform:scaleX(0.93);transform-origin:0 0;">TMXS</div>
<div class="a" style="left:110px;top:311px;width:44px;height:15px;background:#fff;border-top:1px solid #7a7a7a;border-left:1px solid #7a7a7a;border-right:1px solid #7a7a7a;"></div>
<div class="a" style="left:110px;top:325px;width:27px;height:1px;background:#7a7a7a;"></div>
<div class="a" style="left:138px;top:313px;width:14px;height:13px;background:#ececec;"></div>
<div class="a" style="left:138px;top:313px;width:1px;height:13px;background:#a8a8a8;"></div>
<div class="a" style="left:151px;top:313px;width:1px;height:13px;background:#a8a8a8;"></div>
<div class="a" style="left:138px;top:320px;width:14px;height:1px;background:#b8b8b8;"></div>
<svg class="a" style="left:138px;top:313px" width="14" height="13"><path d="M3.5 5.2 L7 1.8 L10.5 5.2Z M3.5 9 L7 12.4 L10.5 9Z" fill="#000"/></svg>
<svg class="a" style="left:110px;top:311px" width="20" height="15"><rect x="6" y="4" width="1.15" height="9" fill="#1a1a1a"/><path d="M4 5.9 L6.6 4.3" stroke="#1a1a1a" stroke-width="1.1"/></svg>
<div class="a" style="left:155px;top:311px;width:44px;height:15px;background:#fff;border-top:1px solid #7a7a7a;border-left:1px solid #7a7a7a;border-right:1px solid #7a7a7a;"></div>
<div class="a" style="left:155px;top:325px;width:27px;height:1px;background:#7a7a7a;"></div>
<div class="a" style="left:183px;top:313px;width:14px;height:13px;background:#ececec;"></div>
<div class="a" style="left:183px;top:313px;width:1px;height:13px;background:#a8a8a8;"></div>
<div class="a" style="left:196px;top:313px;width:1px;height:13px;background:#a8a8a8;"></div>
<div class="a" style="left:183px;top:320px;width:14px;height:1px;background:#b8b8b8;"></div>
<svg class="a" style="left:183px;top:313px" width="14" height="13"><path d="M3.5 5.2 L7 1.8 L10.5 5.2Z M3.5 9 L7 12.4 L10.5 9Z" fill="#000"/></svg>
<svg class="a" style="left:155px;top:311px" width="20" height="15"><rect x="6" y="4" width="1.15" height="9" fill="#1a1a1a"/><path d="M4 5.9 L6.6 4.3" stroke="#1a1a1a" stroke-width="1.1"/><ellipse cx="12.05" cy="8.5" rx="2.35" ry="3.95" fill="none" stroke="#1a1a1a" stroke-width="1.15"/></svg>
<div class="a" style="left:200px;top:312px;width:13px;height:13px;border:1px solid #333;background:#fff;"></div>
<div class="a" style="left:238px;top:311px;width:16px;height:15px;background:#fffde1;"></div>
<div class="a" style="left:263px;top:311px;width:16px;height:15px;background:#000;"></div>
<div class="a t" style="left:64.80px;top:329.34px;font-size:12px;line-height:12px;color:#000;font-weight:bold;transform:scaleX(0.98);transform-origin:0 0;">TSX</div>
<div class="a" style="left:110px;top:327px;width:44px;height:15px;background:#fff;border-top:1px solid #7a7a7a;border-left:1px solid #7a7a7a;border-right:1px solid #7a7a7a;"></div>
<div class="a" style="left:110px;top:341px;width:27px;height:1px;background:#7a7a7a;"></div>
<div class="a" style="left:138px;top:329px;width:14px;height:13px;background:#ececec;"></div>
<div class="a" style="left:138px;top:329px;width:1px;height:13px;background:#a8a8a8;"></div>
<div class="a" style="left:151px;top:329px;width:1px;height:13px;background:#a8a8a8;"></div>
<div class="a" style="left:138px;top:336px;width:14px;height:1px;background:#b8b8b8;"></div>
<svg class="a" style="left:138px;top:329px" width="14" height="13"><path d="M3.5 5.2 L7 1.8 L10.5 5.2Z M3.5 9 L7 12.4 L10.5 9Z" fill="#000"/></svg>
<svg class="a" style="left:110px;top:327px" width="20" height="15"><rect x="6" y="4" width="1.15" height="9" fill="#1a1a1a"/><path d="M4 5.9 L6.6 4.3" stroke="#1a1a1a" stroke-width="1.1"/></svg>
<div class="a" style="left:155px;top:327px;width:44px;height:15px;background:#fff;border-top:1px solid #7a7a7a;border-left:1px solid #7a7a7a;border-right:1px solid #7a7a7a;"></div>
<div class="a" style="left:155px;top:341px;width:27px;height:1px;background:#7a7a7a;"></div>
<div class="a" style="left:183px;top:329px;width:14px;height:13px;background:#ececec;"></div>
<div class="a" style="left:183px;top:329px;width:1px;height:13px;background:#a8a8a8;"></div>
<div class="a" style="left:196px;top:329px;width:1px;height:13px;background:#a8a8a8;"></div>
<div class="a" style="left:183px;top:336px;width:14px;height:1px;background:#b8b8b8;"></div>
<svg class="a" style="left:183px;top:329px" width="14" height="13"><path d="M3.5 5.2 L7 1.8 L10.5 5.2Z M3.5 9 L7 12.4 L10.5 9Z" fill="#000"/></svg>
<svg class="a" style="left:155px;top:327px" width="20" height="15"><rect x="6" y="4" width="1.15" height="9" fill="#1a1a1a"/><path d="M4 5.9 L6.6 4.3" stroke="#1a1a1a" stroke-width="1.1"/><ellipse cx="12.05" cy="8.5" rx="2.35" ry="3.95" fill="none" stroke="#1a1a1a" stroke-width="1.15"/></svg>
<div class="a" style="left:200px;top:328px;width:13px;height:13px;border:1px solid #333;background:#fff;"></div>
<div class="a" style="left:238px;top:327px;width:16px;height:15px;background:#fffde1;"></div>
<div class="a" style="left:263px;top:327px;width:16px;height:15px;background:#000;"></div>
<svg class="a" style="left:200px;top:104px" width="13" height="13"><path d="M2.5 6.5 L5 9.5 L10.5 3" fill="none" stroke="#333" stroke-width="1.2"/></svg>
<div class="a" style="left:237px;top:102px;width:18px;height:17px;border:1px solid #ff0000;"></div>
<div class="a" style="left:359px;top:83px;width:16px;height:260px;background:#f0f0f0;"></div>
<div class="a" style="left:359px;top:201px;width:15px;height:125px;background:#cdcdcd;"></div>
<svg class="a" style="left:362px;top:88px" width="9" height="9"><path d="M1.2 6.2 L4.5 2.6 L7.8 6.2" fill="none" stroke="#5a5a5a" stroke-width="2.1"/></svg>
<svg class="a" style="left:362px;top:331px" width="9" height="9"><path d="M1.2 1.8 L4.5 5.4 L7.8 1.8" fill="none" stroke="#5a5a5a" stroke-width="2.1"/></svg>
<div class="a" style="left:393px;top:59px;width:161px;height:314px;border:1px solid #dcdcdc;"></div>
<div class="a" style="left:400px;top:58px;width:115px;height:3px;background:#fff;"></div>
<div class="a t" style="left:400.50px;top:55.10px;font-size:11.2px;line-height:11.2px;color:#000;letter-spacing:-0.3px;">Price Level Color Bands</div>
<div class="a" style="left:403px;top:73px;width:90px;height:291px;border:1px solid #828790;background:#fff;"></div>
<div class="a" style="left:425px;top:74px;width:1px;height:19px;background:#e5e5e5;"></div>
<div class="a" style="left:464px;top:74px;width:1px;height:19px;background:#e5e5e5;"></div>
<div class="a" style="left:426px;top:80.40px;width:38px;height:12px;overflow:hidden;"><div class="a t" style="left:0px;top:0;width:38px;text-align:center;font-size:10px;line-height:11px;color:#333;letter-spacing:0px;transform:scaleX(0.92);transform-origin:50% 0;">BGD</div></div>
<div class="a" style="left:465px;top:79.80px;width:27px;height:12px;overflow:hidden;"><div class="a t" style="left:-3px;top:0;width:45px;text-align:center;font-size:10px;line-height:11px;color:#111;letter-spacing:0px;transform:scaleX(0.9);transform-origin:50% 0;">Color</div></div>
<div class="a" style="left:426px;top:93px;width:38px;height:15px;background:#fff87a;"></div>
<div class="a" style="left:465px;top:93px;width:27px;height:15px;background:#000;"></div>
<div class="a t" style="left:408.30px;top:98.08px;font-size:10.2px;line-height:10.2px;color:#222;transform:scaleX(0.98);transform-origin:0 0;">1</div>
<div class="a" style="left:426px;top:109px;width:38px;height:15px;background:#ff1c1c;"></div>
<div class="a" style="left:465px;top:109px;width:27px;height:15px;background:#000;"></div>
<div class="a t" style="left:408.30px;top:114.08px;font-size:10.2px;line-height:10.2px;color:#222;transform:scaleX(0.98);transform-origin:0 0;">2</div>
<div class="a" style="left:426px;top:125px;width:38px;height:15px;background:#0078ff;"></div>
<div class="a" style="left:465px;top:125px;width:27px;height:15px;background:#000;"></div>
<div class="a t" style="left:408.30px;top:130.08px;font-size:10.2px;line-height:10.2px;color:#222;transform:scaleX(0.98);transform-origin:0 0;">3</div>
<div class="a" style="left:426px;top:141px;width:38px;height:15px;background:#7b55a6;"></div>
<div class="a" style="left:465px;top:141px;width:27px;height:15px;background:#000;"></div>
<div class="a t" style="left:408.30px;top:146.08px;font-size:10.2px;line-height:10.2px;color:#222;transform:scaleX(0.98);transform-origin:0 0;">4</div>
<div class="a" style="left:426px;top:157px;width:38px;height:15px;background:#3ef0f4;"></div>
<div class="a" style="left:465px;top:157px;width:27px;height:15px;background:#000;"></div>
<div class="a t" style="left:408.30px;top:162.08px;font-size:10.2px;line-height:10.2px;color:#222;transform:scaleX(0.98);transform-origin:0 0;">5</div>
<div class="a" style="left:426px;top:173px;width:38px;height:15px;background:#00c000;"></div>
<div class="a" style="left:465px;top:173px;width:27px;height:15px;background:#000;"></div>
<div class="a t" style="left:408.30px;top:178.08px;font-size:10.2px;line-height:10.2px;color:#222;transform:scaleX(0.98);transform-origin:0 0;">6</div>
<div class="a" style="left:426px;top:189px;width:38px;height:15px;background:#c020c0;"></div>
<div class="a" style="left:465px;top:189px;width:27px;height:15px;background:#000;"></div>
<div class="a t" style="left:408.30px;top:194.08px;font-size:10.2px;line-height:10.2px;color:#222;transform:scaleX(0.98);transform-origin:0 0;">7</div>
<div class="a" style="left:426px;top:205px;width:38px;height:15px;background:#a8aa72;"></div>
<div class="a" style="left:465px;top:205px;width:27px;height:15px;background:#000;"></div>
<div class="a t" style="left:408.30px;top:210.08px;font-size:10.2px;line-height:10.2px;color:#222;transform:scaleX(0.98);transform-origin:0 0;">8</div>
<div class="a" style="left:426px;top:221px;width:38px;height:15px;background:#62bea0;"></div>
<div class="a" style="left:465px;top:221px;width:27px;height:15px;background:#000;"></div>
<div class="a t" style="left:408.30px;top:226.08px;font-size:10.2px;line-height:10.2px;color:#222;transform:scaleX(0.98);transform-origin:0 0;">9</div>
<div class="a" style="left:426px;top:237px;width:38px;height:15px;background:#be9010;"></div>
<div class="a" style="left:465px;top:237px;width:27px;height:15px;background:#000;"></div>
<div class="a t" style="left:408.30px;top:242.08px;font-size:10.2px;line-height:10.2px;color:#222;transform:scaleX(0.98);transform-origin:0 0;">10</div>
<div class="a" style="left:426px;top:253px;width:38px;height:15px;background:#646464;"></div>
<div class="a" style="left:465px;top:253px;width:27px;height:15px;background:#000;"></div>
<div class="a t" style="left:408.30px;top:258.08px;font-size:10.2px;line-height:10.2px;color:#222;transform:scaleX(0.98);transform-origin:0 0;">11</div>
<div class="a" style="left:404px;top:268px;width:22px;height:78px;background:#f0f0f0;"></div>
<div class="a" style="left:405px;top:347px;width:86px;height:15px;background:#f0f0f0;"></div>
<div class="a" style="left:421px;top:347px;width:45px;height:15px;background:#cdcdcd;"></div>
<svg class="a" style="left:408px;top:350px" width="9" height="9"><path d="M6.2 1.2 L2.6 4.5 L6.2 7.8" fill="none" stroke="#5a5a5a" stroke-width="2.1"/></svg>
<svg class="a" style="left:480px;top:350px" width="9" height="9"><path d="M1.8 1.2 L5.4 4.5 L1.8 7.8" fill="none" stroke="#5a5a5a" stroke-width="2.1"/></svg>
<div class="a" style="left:499px;top:73px;width:45px;height:290px;border:1px solid #dcdcdc;background:#fff;"></div>
<div class="a" style="left:510px;top:157px;width:23px;height:21px;border:1px solid #adadad;background:#e1e1e1;"></div>
<div class="a" style="left:518px;top:168px;width:7px;height:1px;background:#000;"></div>
<div class="a" style="left:521px;top:165px;width:1px;height:7px;background:#000;"></div>
<div class="a" style="left:510px;top:259px;width:23px;height:21px;border:1px solid #adadad;background:#e1e1e1;"></div>
<div class="a" style="left:519px;top:270px;width:4px;height:1px;background:#000;"></div>
<div class="a" style="left:563px;top:59px;width:181px;height:314px;border:1px solid #dcdcdc;"></div>
<div class="a" style="left:572px;top:58px;width:96px;height:3px;background:#fff;"></div>
<div class="a t" style="left:572.00px;top:55.10px;font-size:11.2px;line-height:11.2px;color:#000;letter-spacing:-0.2px;">Axes Color Settings</div>
<div class="a" style="left:573px;top:73px;width:110px;height:291px;border:1px solid #828790;background:#fff;"></div>
<div class="a" style="left:612px;top:74px;width:1px;height:19px;background:#e5e5e5;"></div>
<div class="a" style="left:651px;top:74px;width:1px;height:19px;background:#e5e5e5;"></div>
<div class="a" style="left:575px;top:80.40px;width:37px;height:12px;overflow:hidden;"><div class="a t" style="left:0px;top:0;width:37px;text-align:center;font-size:10px;line-height:11px;color:#333;letter-spacing:0px;transform:scaleX(0.95);transform-origin:50% 0;">Axe</div></div>
<div class="a" style="left:613px;top:80.40px;width:38px;height:12px;overflow:hidden;"><div class="a t" style="left:0px;top:0;width:38px;text-align:center;font-size:10px;line-height:11px;color:#333;letter-spacing:0px;transform:scaleX(0.92);transform-origin:50% 0;">BGD</div></div>
<div class="a" style="left:652px;top:79.80px;width:30px;height:12px;overflow:hidden;"><div class="a t" style="left:-1px;top:0;width:40px;text-align:center;font-size:10px;line-height:11px;color:#111;letter-spacing:0px;transform:scaleX(0.9);transform-origin:50% 0;">Color</div></div>
<div class="a" style="left:682px;top:73px;width:1px;height:291px;background:#828790;"></div>
<div class="a" style="left:613px;top:93px;width:38px;height:15px;background:#000;"></div>
<div class="a" style="left:652px;top:93px;width:30px;height:15px;background:#f0f000;"></div>
<div class="a t" style="left:576.80px;top:95.58px;font-size:11.5px;line-height:11.5px;color:#000;letter-spacing:-0.3px;">MSCO</div>
<div class="a" style="left:574px;top:109px;width:38px;height:15px;background:#f3f3f3;"></div>
<div class="a" style="left:613px;top:109px;width:38px;height:15px;background:#000;"></div>
<div class="a" style="left:652px;top:109px;width:30px;height:15px;background:#e00000;"></div>
<div class="a t" style="left:576.80px;top:111.58px;font-size:11.5px;line-height:11.5px;color:#000;letter-spacing:-0.3px;">LEHM</div>
<div class="a" style="left:613px;top:125px;width:38px;height:15px;background:#000;"></div>
<div class="a" style="left:652px;top:125px;width:30px;height:15px;background:#00d000;"></div>
<div class="a t" style="left:576.80px;top:127.58px;font-size:11.5px;line-height:11.5px;color:#000;letter-spacing:-0.3px;">BRMS</div>
<div class="a" style="left:574px;top:141px;width:38px;height:15px;background:#f3f3f3;"></div>
<div class="a" style="left:613px;top:141px;width:38px;height:15px;background:#000;"></div>
<div class="a" style="left:652px;top:141px;width:30px;height:15px;background:#e884e8;"></div>
<div class="a t" style="left:576.80px;top:143.58px;font-size:11.5px;line-height:11.5px;color:#000;letter-spacing:-0.3px;">GETC</div>
<div class="a" style="left:613px;top:157px;width:38px;height:15px;background:#000;"></div>
<div class="a" style="left:652px;top:157px;width:30px;height:15px;background:#00f8f8;"></div>
<div class="a t" style="left:576.80px;top:159.58px;font-size:11.5px;line-height:11.5px;color:#000;font-weight:bold;letter-spacing:-0.3px;">TIMB</div>
<div class="a" style="left:575px;top:158px;width:37px;height:14px;border:1px dotted #000;"></div>
<div class="a" style="left:575px;top:347px;width:106px;height:15px;background:#f0f0f0;"></div>
<div class="a" style="left:591px;top:347px;width:68px;height:15px;background:#cdcdcd;"></div>
<svg class="a" style="left:578px;top:350px" width="9" height="9"><path d="M6.2 1.2 L2.6 4.5 L6.2 7.8" fill="none" stroke="#5a5a5a" stroke-width="2.1"/></svg>
<svg class="a" style="left:670px;top:350px" width="9" height="9"><path d="M1.8 1.2 L5.4 4.5 L1.8 7.8" fill="none" stroke="#5a5a5a" stroke-width="2.1"/></svg>
<div class="a" style="left:689px;top:73px;width:45px;height:290px;border:1px solid #dcdcdc;background:#fff;"></div>
<div class="a" style="left:700px;top:131px;width:23px;height:21px;border:2px solid #0078d7;background:#e1e1e1;"></div>
<div class="a" style="left:708px;top:142px;width:7px;height:1px;background:#000;"></div>
<div class="a" style="left:711px;top:139px;width:1px;height:7px;background:#000;"></div>
<div class="a" style="left:700px;top:207px;width:23px;height:21px;border:1px solid #adadad;background:#e1e1e1;"></div>
<div class="a" style="left:709px;top:218px;width:4px;height:1px;background:#000;"></div>
<div class="a" style="left:700px;top:283px;width:23px;height:21px;border:1px solid #adadad;background:#e1e1e1;"></div>
<div class="a t" style="left:707.50px;top:288.62px;font-size:11px;line-height:11px;color:#000;">x</div>
<div class="a" style="left:53px;top:386px;width:291px;height:74px;border:1px solid #dcdcdc;"></div>
<div class="a" style="left:62px;top:385px;width:70px;height:3px;background:#fff;"></div>
<div class="a t" style="left:62.00px;top:382.32px;font-size:11px;line-height:11px;color:#000;letter-spacing:-0.1px;">Other Options</div>
<div class="a t" style="left:62.50px;top:417.12px;font-size:11px;line-height:11px;color:#000;letter-spacing:-0.3px;">Grid Line Color</div>
<div class="a" style="left:150px;top:411px;width:30px;height:18px;background:#d2691e;"></div>
<div class="a" style="left:180px;top:410px;width:1px;height:20px;background:#a0a0a0;"></div>
<div class="a" style="left:149px;top:429px;width:32px;height:1px;background:#a0a0a0;"></div>
<div class="a t" style="left:208.50px;top:417.12px;font-size:11px;line-height:11px;color:#000;letter-spacing:-0.25px;">Header</div>
<div class="a t" style="left:267.00px;top:397.12px;font-size:11px;line-height:11px;color:#000;letter-spacing:-0.25px;">Back</div>
<div class="a t" style="left:308.00px;top:397.12px;font-size:11px;line-height:11px;color:#000;letter-spacing:0.6px;">Text</div>
<div class="a" style="left:264px;top:411px;width:30px;height:18px;background:#d3d3d3;"></div>
<div class="a" style="left:294px;top:410px;width:1px;height:20px;background:#a0a0a0;"></div>
<div class="a" style="left:263px;top:429px;width:32px;height:1px;background:#a0a0a0;"></div>
<div class="a" style="left:304px;top:411px;width:30px;height:18px;background:#000;"></div>
<div class="a" style="left:334px;top:410px;width:1px;height:20px;background:#a0a0a0;"></div>
<div class="a" style="left:303px;top:429px;width:32px;height:1px;background:#a0a0a0;"></div>
<div class="a t" style="left:183.50px;top:442.62px;font-size:11px;line-height:11px;color:#000;letter-spacing:-0.3px;">Background</div>
<div class="a" style="left:264px;top:437px;width:30px;height:18px;background:#808080;"></div>
<div class="a" style="left:294px;top:436px;width:1px;height:20px;background:#a0a0a0;"></div>
<div class="a" style="left:263px;top:455px;width:32px;height:1px;background:#a0a0a0;"></div>
<div class="a" style="left:353px;top:386px;width:181px;height:74px;border:1px solid #dcdcdc;"></div>
<div class="a" style="left:361px;top:385px;width:67px;height:3px;background:#fff;"></div>
<div class="a t" style="left:361.50px;top:382.32px;font-size:11px;line-height:11px;color:#000;letter-spacing:-0.18px;">Level1 Colors</div>
<div class="a t" style="left:437.00px;top:397.12px;font-size:11px;line-height:11px;color:#000;letter-spacing:-0.25px;">Back</div>
<div class="a t" style="left:477.50px;top:397.12px;font-size:11px;line-height:11px;color:#000;letter-spacing:0.9px;">Text</div>
<div class="a t" style="left:362.50px;top:417.12px;font-size:11px;line-height:11px;color:#000;letter-spacing:-0.25px;">Up Tick</div>
<div class="a t" style="left:362.50px;top:443.12px;font-size:11px;line-height:11px;color:#000;letter-spacing:-0.25px;">Down Tick</div>
<div class="a" style="left:434px;top:411px;width:30px;height:18px;background:#008000;"></div>
<div class="a" style="left:464px;top:410px;width:1px;height:20px;background:#a0a0a0;"></div>
<div class="a" style="left:433px;top:429px;width:32px;height:1px;background:#a0a0a0;"></div>
<div class="a" style="left:474px;top:411px;width:30px;height:18px;background:#000;"></div>
<div class="a" style="left:504px;top:410px;width:1px;height:20px;background:#a0a0a0;"></div>
<div class="a" style="left:473px;top:429px;width:32px;height:1px;background:#a0a0a0;"></div>
<div class="a" style="left:434px;top:437px;width:30px;height:18px;background:#ff0000;"></div>
<div class="a" style="left:464px;top:436px;width:1px;height:20px;background:#a0a0a0;"></div>
<div class="a" style="left:433px;top:455px;width:32px;height:1px;background:#a0a0a0;"></div>
<div class="a" style="left:474px;top:437px;width:30px;height:18px;background:#000;"></div>
<div class="a" style="left:504px;top:436px;width:1px;height:20px;background:#a0a0a0;"></div>
<div class="a" style="left:473px;top:455px;width:32px;height:1px;background:#a0a0a0;"></div>
<div class="a" style="left:543px;top:386px;width:201px;height:74px;border:1px solid #dcdcdc;"></div>
<div class="a" style="left:552px;top:385px;width:88px;height:3px;background:#fff;"></div>
<div class="a t" style="left:552.00px;top:382.62px;font-size:11px;line-height:11px;color:#000;letter-spacing:-0.15px;">Order Highlighting</div>
<div class="a" style="left:553px;top:404px;width:13px;height:13px;border:1px solid #333;background:#fff;"></div>
<div class="a t" style="left:570.50px;top:405.82px;font-size:11px;line-height:11px;color:#000;letter-spacing:-0.08px;">Highlight Accepted Orders</div>
<div class="a t" style="left:626.50px;top:422.82px;font-size:11px;line-height:11px;color:#000;letter-spacing:-0.25px;">Back</div>
<div class="a t" style="left:667.50px;top:422.82px;font-size:11px;line-height:11px;color:#000;letter-spacing:0.9px;">Text</div>
<div class="a t" style="left:552.50px;top:442.82px;font-size:11px;line-height:11px;color:#000;letter-spacing:-0.1px;">Order Color</div>
<div class="a" style="left:624px;top:437px;width:30px;height:18px;background:#000;"></div>
<div class="a" style="left:654px;top:436px;width:1px;height:20px;background:#a0a0a0;"></div>
<div class="a" style="left:623px;top:455px;width:32px;height:1px;background:#a0a0a0;"></div>
<div class="a" style="left:664px;top:437px;width:30px;height:18px;background:#fff;"></div>
<div class="a" style="left:694px;top:436px;width:1px;height:20px;background:#a0a0a0;"></div>
<div class="a" style="left:663px;top:455px;width:32px;height:1px;background:#a0a0a0;"></div>
<div class="a" style="left:31px;top:481px;width:731px;height:70px;border:1px solid #dcdcdc;background:#f0f0f0;"></div>
<div class="a" style="left:372px;top:492px;width:114px;height:21px;border:1px solid #adadad;background:#e1e1e1;"></div>
<div class="a t" style="left:397.30px;top:497.37px;font-size:11.6px;line-height:11.6px;color:#000;letter-spacing:-0.38px;">Load Default</div>
<div class="a" style="left:500px;top:492px;width:113px;height:21px;border:1px solid #adadad;background:#e1e1e1;"></div>
<div class="a t" style="left:517.50px;top:497.37px;font-size:11.6px;line-height:11.6px;color:#000;letter-spacing:-0.28px;">Save as Default</div>
<div class="a" style="left:627px;top:492px;width:114px;height:21px;border:1px solid #adadad;background:#e1e1e1;"></div>
<div class="a t" style="left:669.80px;top:497.37px;font-size:11.6px;line-height:11.6px;color:#000;letter-spacing:-0.35px;">Apply</div>
<div class="a" style="left:500px;top:527px;width:113px;height:21px;border:1px solid #adadad;background:#e1e1e1;"></div>
<div class="a t" style="left:548.60px;top:532.37px;font-size:11.6px;line-height:11.6px;color:#000;letter-spacing:-0.6px;">OK</div>
<div class="a" style="left:627px;top:527px;width:114px;height:21px;border:1px solid #adadad;background:#e1e1e1;"></div>
<div class="a t" style="left:667.50px;top:532.37px;font-size:11.6px;line-height:11.6px;color:#000;letter-spacing:-0.45px;">Cancel</div>
</body></html>
